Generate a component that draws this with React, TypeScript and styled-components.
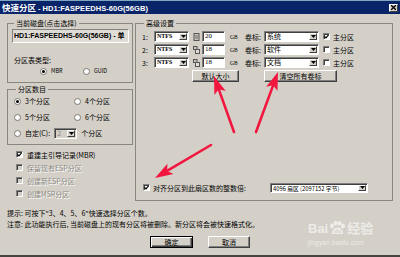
import styled, { createGlobalStyle } from "styled-components";

const GlobalStyle = createGlobalStyle`
  html, body {
    margin: 0;
    padding: 0;
    background: #d4d0c8;
  }
  body {
    font-family: "Noto Sans CJK SC", "Liberation Sans", sans-serif;
    font-size: 7px;
    color: #000;
  }
  * {
    box-sizing: border-box;
  }
`;

type Pt = [number, number];

// arrow drawn from tail to tip, with a notched head
function arrowParts(tail: Pt, tip: Pt, len = 18, half = 6, notch = 4) {
  const dx = tip[0] - tail[0];
  const dy = tip[1] - tail[1];
  const d = Math.hypot(dx, dy);
  const ux = dx / d;
  const uy = dy / d;
  const nx = -uy;
  const ny = ux;
  const bx = tip[0] - ux * len;
  const by = tip[1] - uy * len;
  const mx = bx + ux * notch;
  const my = by + uy * notch;
  const head = [
    [tip[0], tip[1]],
    [bx + nx * half, by + ny * half],
    [mx, my],
    [bx - nx * half, by - ny * half],
  ]
    .map((p) => p.join(","))
    .join(" ");
  return { head, shaft: { x1: tail[0], y1: tail[1], x2: mx, y2: my } };
}

const arrows: [Pt, Pt][] = [
  [[234, 132], [214, 76]],
  [[256, 132], [278, 72]],
  [[211, 145], [155, 178]],
];

const partRows = [
  { n: "1:", size: "20", label: "系统", primary: true, icon: "disk" },
  { n: "2:", size: "18", label: "软件", primary: false, icon: "tool" },
  { n: "3:", size: "18", label: "文档", primary: false, icon: "tool" },
];

export default function App() {
  return (
    <>
      <GlobalStyle />
      <Window>
        <TopStrip />
        <TitleBar>
          <TitleText>
            快速分区 <Ascii>- HD1:FASPEEDHS-60G(56GB)</Ascii>
          </TitleText>
          <CloseButton>
            <svg width="5" height="5" viewBox="0 0 5 5">
              <path d="M0 0 L5 5 M5 0 L0 5" stroke="#000" strokeWidth="1.3" />
            </svg>
          </CloseButton>
        </TitleBar>

        <Main>
          <LeftCol>
            <GroupBox $h={65} $pad="0 3px 0 4px">
              <Legend>当前磁盘(点击选择)</Legend>
              <DiskField>HD1:FASPEEDHS-60G(56GB) - 单</DiskField>
              <TypeLabel>分区表类型:</TypeLabel>
              <RadioRow>
                <Option $small>
                  <Radio $checked />
                  MBR
                </Option>
                <Option $small>
                  <Radio />
                  GUID
                </Option>
              </RadioRow>
            </GroupBox>

            <GroupBox $h={61} $pad="0 3px 0 6px" $mt={1}>
              <Legend>分区数目</Legend>
              <CountGrid>
                <Option>
                  <Radio $checked />
                  3个分区
                </Option>
                <Option>
                  <Radio />
                  4个分区
                </Option>
                <Option>
                  <Radio />
                  5个分区
                </Option>
                <Option>
                  <Radio />
                  6个分区
                </Option>
                <CustomRow>
                  <Option>
                    <Radio />
                    自定(C):
                  </Option>
                  <Combo $w={23} $disabled>
                    <ComboText $disabled>2</ComboText>
                    <ComboButton>
                      <DownTri />
                    </ComboButton>
                  </Combo>
                  <span>个分区</span>
                </CustomRow>
              </CountGrid>
            </GroupBox>

            <CheckList>
              <CheckItem>
                <CheckBox $checked>
                  <CheckMark />
                </CheckBox>
                重建主引导记录(MBR)
              </CheckItem>
              <CheckItem $disabled>
                <CheckBox $disabled />
                保留现有ESP分区
              </CheckItem>
              <CheckItem $disabled>
                <CheckBox $disabled />
                创建新ESP分区
              </CheckItem>
              <CheckItem $disabled>
                <CheckBox $disabled />
                创建MSR分区
              </CheckItem>
            </CheckList>
          </LeftCol>

          <GroupBox $h={183} $w={258} $pad="0 24px 7px 6px">
            <Legend>高级设置</Legend>
            <PartGrid>
              {partRows.map((r) => (
                <PartRow key={r.n}>
                  <span>{r.n}</span>
                  <Combo $w={35}>
                    <ComboText $bold>NTFS</ComboText>
                    <ComboButton>
                      <DownTri />
                    </ComboButton>
                  </Combo>
                  <RowIcon kind={r.icon} />
                  <SizeInput>{r.size}</SizeInput>
                  <Unit>GB</Unit>
                  <span>卷标:</span>
                  <Combo $w={55}>
                    <ComboText>{r.label}</ComboText>
                    <ComboButton>
                      <DownTri />
                    </ComboButton>
                  </Combo>
                  <CheckBox $checked={r.primary}>{r.primary && <CheckMark />}</CheckBox>
                  <span>主分区</span>
                </PartRow>
              ))}
              <ActionRow>
                <DefaultSizeButton>默认大小</DefaultSizeButton>
                <ClearButton>清空所有卷标</ClearButton>
              </ActionRow>
            </PartGrid>

            <AlignRow>
              <CheckBox $checked>
                <CheckMark />
              </CheckBox>
              <AlignText>对齐分区到此扇区数的整数倍:</AlignText>
              <Combo $w={98} $h={10}>
                <ComboText $small>4096 扇区 (2097152 字节)</ComboText>
                <ComboButton>
                  <DownTri />
                </ComboButton>
              </Combo>
            </AlignRow>
          </GroupBox>
        </Main>

        <Notes>
          <div>提示: 可按下"3、4、5、6"快速选择分区个数。</div>
          <div>注意: 此功能执行后, 当前磁盘上的现有分区将被删除。新分区将会被快速格式化。</div>
        </Notes>

        <ButtonRow>
          <DialogButton $default $w={43}>
            确定
          </DialogButton>
          <DialogButton $w={42}>取消</DialogButton>
        </ButtonRow>

        <Watermark>
          <MarkTop>
            <span>Bai</span>
            <Paw>
              <svg width="17" height="15" viewBox="0 0 17 15">
                <ellipse cx="3" cy="5" rx="2" ry="2.4" fill="currentColor" />
                <ellipse cx="6.5" cy="2.3" rx="2" ry="2.3" fill="currentColor" />
                <ellipse cx="10.5" cy="2.3" rx="2" ry="2.3" fill="currentColor" />
                <ellipse cx="14" cy="5" rx="2" ry="2.4" fill="currentColor" />
                <path d="M3 13 Q3 7 8.5 6.5 Q14 7 14 13 Z" fill="currentColor" />
              </svg>
              <PawText>du</PawText>
            </Paw>
            <span>经验</span>
          </MarkTop>
          <MarkBottom>jingyan.baidu.com</MarkBottom>
        </Watermark>

        <ArrowLayer width="400" height="257" viewBox="0 0 400 257">
          {arrows.map(([t, p], i) => {
            const a = arrowParts(t, p);
            return (
              <g key={i}>
                <line {...a.shaft} stroke="#f2173f" strokeWidth="2.6" strokeLinecap="round" />
                <polygon points={a.head} fill="#f2173f" />
              </g>
            );
          })}
        </ArrowLayer>
      </Window>
    </>
  );
}

function DownTri() {
  return (
    <svg width="5" height="3" viewBox="0 0 5 3">
      <path d="M0 0 H5 L2.5 3 Z" fill="#000" />
    </svg>
  );
}

function CheckMark() {
  return (
    <svg width="5" height="5" viewBox="0 0 5 5">
      <path d="M0.5 2.3 L2 3.8 L4.6 0.8" stroke="#000" strokeWidth="1.2" fill="none" />
    </svg>
  );
}

function RowIcon({ kind }: { kind: string }) {
  return (
    <IconBox>
      {kind === "disk" ? (
        <svg width="7" height="8" viewBox="0 0 7 8">
          <rect x="1" y="0.5" width="5" height="7" fill="#c8c4bc" stroke="#555" />
          <path d="M2 3 H5 M2 5 H5" stroke="#555" strokeWidth="0.8" />
        </svg>
      ) : (
        <svg width="7" height="8" viewBox="0 0 7 8">
          <rect x="0.5" y="0.5" width="3.5" height="3" fill="#c8c4bc" stroke="#555" />
          <rect x="2.5" y="3.5" width="4" height="4" fill="#e0ddd6" stroke="#555" />
        </svg>
      )}
    </IconBox>
  );
}

const Window = styled.div`
  position: relative;
  width: 400px;
  height: 257px;
  background: #d4d0c8;
  display: flex;
  flex-direction: column;
  border-bottom: 2px solid #45443f;
  overflow: hidden;
`;

const TopStrip = styled.div`
  height: 1px;
  background: #7fa7c0;
`;

const TitleBar = styled.div`
  height: 13px;
  background: #0a246a;
  color: #fff;
  display: flex;
  align-items: center;
  justify-content: space-between;
  padding: 0 2px 0 2px;
  white-space: nowrap;
`;

const TitleText = styled.span`
  font-size: 8.5px;
  font-weight: 700;
  line-height: 13px;
`;

const Ascii = styled.span`
  font-family: "Liberation Sans", sans-serif;
  font-size: 7.5px;
  letter-spacing: 0.05px;
`;

const CloseButton = styled.div`
  width: 9px;
  height: 8px;
  background: #d4d0c8;
  border: 1px solid;
  border-color: #fff #404040 #404040 #fff;
  display: flex;
  align-items: center;
  justify-content: center;
`;

const Main = styled.div`
  display: flex;
  gap: 2px;
  padding: 4px 7px 0 7px;
  height: 187px;
`;

const LeftCol = styled.div`
  width: 126px;
  display: flex;
  flex-direction: column;
`;

const GroupBox = styled.fieldset<{ $h: number; $w?: number; $pad: string; $mt?: number }>`
  margin: ${(p) => p.$mt ?? 0}px 0 0 0;
  padding: ${(p) => p.$pad};
  height: ${(p) => p.$h}px;
  width: ${(p) => (p.$w ? `${p.$w}px` : "auto")};
  min-width: 0;
  border: 1px solid #8a8781;
  display: flex;
  flex-direction: column;
`;

const Legend = styled.legend`
  font-size: 7px;
  line-height: 10px;
  padding: 0 2px;
  margin-left: 2px;
  color: #000;
`;

const DiskField = styled.div`
  margin-top: 1px;
  height: 14px;
  background: #dfdcd6;
  border: 1px solid;
  border-color: #808080 #fff #fff #808080;
  font-family: "Liberation Sans", "Noto Sans CJK SC", sans-serif;
  font-weight: 700;
  font-size: 7px;
  line-height: 12px;
  padding-left: 1px;
  white-space: nowrap;
  overflow: hidden;
`;

const TypeLabel = styled.div`
  margin-top: 12px;
  line-height: 10px;
  padding-left: 2px;
`;

const RadioRow = styled.div`
  margin-top: 1px;
  height: 10px;
  display: grid;
  grid-template-columns: 43px 43px;
  padding-left: 28px;
  align-items: center;
`;

const Option = styled.label<{ $small?: boolean }>`
  display: flex;
  align-items: center;
  gap: 4px;
  white-space: nowrap;
  font-size: ${(p) => (p.$small ? "5.5px" : "7px")};
`;

const Radio = styled.span<{ $checked?: boolean }>`
  width: 7px;
  height: 7px;
  flex: none;
  border-radius: 50%;
  background: #fff;
  border: 1px solid #7a7770;
  display: inline-flex;
  align-items: center;
  justify-content: center;

  &::after {
    content: "";
    width: 3px;
    height: 3px;
    border-radius: 50%;
    background: ${(p) => (p.$checked ? "#000" : "transparent")};
  }
`;

const CountGrid = styled.div`
  margin-top: 1px;
  display: grid;
  grid-template-columns: 60px 60px;
  grid-auto-rows: 12px;
  row-gap: 4px;
  align-items: center;
`;

const CustomRow = styled.div`
  grid-column: 1 / 3;
  display: flex;
  align-items: center;
  gap: 4px;

  & > span:last-child {
    margin-left: 0;
  }
`;

const Combo = styled.div<{ $w: number; $h?: number; $disabled?: boolean }>`
  width: ${(p) => p.$w}px;
  height: ${(p) => p.$h ?? 11}px;
  flex: none;
  display: flex;
  background: ${(p) => (p.$disabled ? "#d4d0c8" : "#fff")};
  border: 1px solid;
  border-color: #808080 #fff #fff #808080;
  box-shadow: inset 1px 1px 0 #404040;
`;

const ComboText = styled.span<{ $bold?: boolean; $small?: boolean; $disabled?: boolean }>`
  flex: 1;
  min-width: 0;
  overflow: hidden;
  white-space: nowrap;
  padding-left: 2px;
  font-size: ${(p) => (p.$small ? "5.8px" : p.$bold ? "6px" : "7px")};
  font-family: ${(p) =>
    p.$bold ? `"Liberation Serif", serif` : `"Noto Sans CJK SC", "Liberation Sans", sans-serif`};
  font-weight: ${(p) => (p.$bold ? 700 : 400)};
  line-height: 9px;
  color: ${(p) => (p.$disabled ? "#8a8781" : "#000")};
`;

const ComboButton = styled.span`
  width: 8px;
  flex: none;
  margin: 1px 1px 1px 0;
  background: #d4d0c8;
  border: 1px solid;
  border-color: #fff #404040 #404040 #fff;
  display: flex;
  align-items: center;
  justify-content: center;
`;

const CheckList = styled.div`
  margin-top: 4px;
  padding-left: 9px;
  display: flex;
  flex-direction: column;
  gap: 2px;
`;

const CheckItem = styled.label<{ $disabled?: boolean }>`
  height: 11px;
  display: flex;
  align-items: center;
  gap: 4px;
  white-space: nowrap;
  color: ${(p) => (p.$disabled ? "#8d8a84" : "#000")};
  text-shadow: ${(p) => (p.$disabled ? "1px 1px 0 #fff" : "none")};
`;

const CheckBox = styled.span<{ $checked?: boolean; $disabled?: boolean }>`
  width: 7px;
  height: 7px;
  flex: none;
  background: ${(p) => (p.$disabled ? "#d4d0c8" : "#fff")};
  border: 1px solid;
  border-color: #808080 #fff #fff #808080;
  box-shadow: inset 1px 1px 0 #404040;
  display: inline-flex;
  align-items: center;
  justify-content: center;
`;

const PartGrid = styled.div`
  margin-top: 3px;
  display: flex;
  flex-direction: column;
  gap: 2px;
`;

const PartRow = styled.div`
  height: 11px;
  display: grid;
  grid-template-columns: 12px 39px 9px 26px 17px 19px 59px 10px auto;
  align-items: center;
  white-space: nowrap;
`;

const IconBox = styled.span`
  display: flex;
  align-items: center;
`;

const SizeInput = styled.span`
  width: 23px;
  height: 11px;
  background: #fff;
  border: 1px solid;
  border-color: #808080 #fff #fff #808080;
  box-shadow: inset 1px 1px 0 #404040;
  font-family: "Liberation Serif", serif;
  font-size: 7px;
  line-height: 9px;
  padding-left: 2px;
`;

const Unit = styled.span`
  font-family: "Liberation Serif", serif;
  font-size: 5.5px;
  padding-left: 2px;
`;

const ActionRow = styled.div`
  height: 12px;
  display: grid;
  grid-template-columns: 50px 72px 74px;
`;

const RaisedButton = styled.div`
  height: 12px;
  background: #d4d0c8;
  border: 1px solid;
  border-color: #fff #404040 #404040 #fff;
  box-shadow: inset -1px -1px 0 #808080;
  display: flex;
  align-items: center;
  justify-content: center;
  font-size: 7px;
  white-space: nowrap;
`;

const DefaultSizeButton = styled(RaisedButton)`
  grid-column: 2;
  width: 47px;
`;

const ClearButton = styled(RaisedButton)`
  grid-column: 3;
  width: 73px;
`;

const AlignRow = styled.div`
  margin-top: auto;
  height: 11px;
  display: flex;
  align-items: center;
  padding-left: 1px;
  white-space: nowrap;

  & > ${Combo} {
    margin-left: auto;
  }
`;

const AlignText = styled.span`
  margin-left: 3px;
`;

const Notes = styled.div`
  margin-top: 7px;
  padding-left: 7px;
  line-height: 11px;
  white-space: nowrap;
`;

const ButtonRow = styled.div`
  margin-top: 6px;
  display: flex;
  justify-content: center;
  gap: 15px;
`;

const DialogButton = styled(RaisedButton)<{ $default?: boolean; $w: number }>`
  width: ${(p) => p.$w}px;
  ${(p) =>
    p.$default &&
    `
    border: 1px solid #000;
    box-shadow: inset 1px 1px 0 #fff, inset -1px -1px 0 #404040, inset -2px -2px 0 #808080;
  `}
`;

const Watermark = styled.div`
  position: absolute;
  left: 308px;
  top: 221px;
  color: rgba(255, 255, 255, 0.62);
  display: flex;
  flex-direction: column;
  align-items: flex-start;
  pointer-events: none;
`;

const MarkTop = styled.div`
  display: flex;
  align-items: center;
  gap: 1px;
  font-family: "Liberation Sans", "Noto Sans CJK SC", sans-serif;
  font-weight: 700;
  font-size: 13px;
  line-height: 15px;
`;

const Paw = styled.span`
  display: inline-flex;
  flex-direction: column;
  align-items: center;
  width: 17px;
  height: 15px;
  overflow: hidden;
`;

const PawText = styled.span`
  margin-top: -8px;
  font-size: 6px;
  line-height: 7px;
  color: #d4d0c8;
`;

const MarkBottom = styled.div`
  margin-top: 3px;
  font-family: "Liberation Sans", sans-serif;
  font-size: 6.5px;
  letter-spacing: 0.2px;
`;

const ArrowLayer = styled.svg`
  position: absolute;
  left: 0;
  top: 0;
  pointer-events: none;
`;
